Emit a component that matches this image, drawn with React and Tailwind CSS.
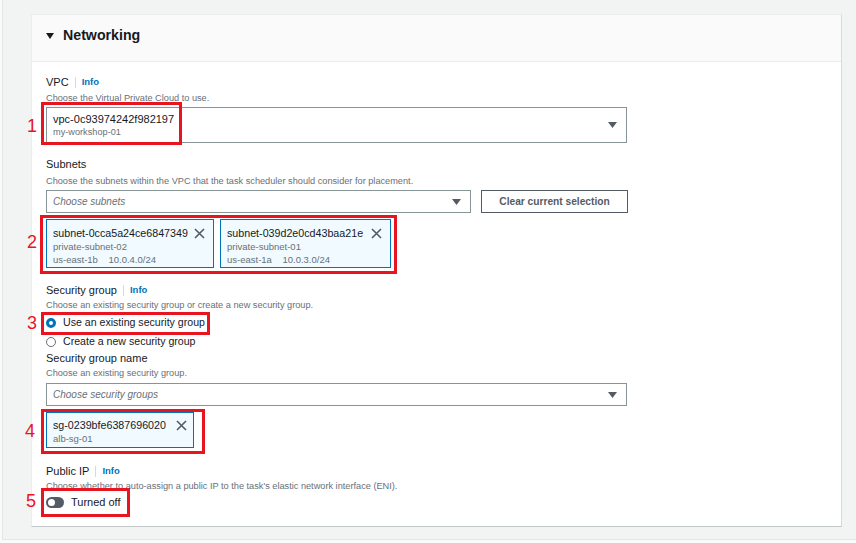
import React from "react";

const F = { fontFamily: '"Liberation Sans", Arial, sans-serif' };

function Caret() {
  return (
    <svg width="9" height="6" viewBox="0 0 9 6" className="shrink-0">
      <path d="M0 0 L9 0 L4.5 6 Z" fill="#545b64" />
    </svg>
  );
}

function XIcon() {
  return (
    <svg width="11" height="11" viewBox="0 0 11 11" className="shrink-0">
      <path d="M1 1 L10 10 M10 1 L1 10" stroke="#545b64" strokeWidth="1.6" />
    </svg>
  );
}

function Label({ children, info }) {
  return (
    <div className="flex items-center h-[14px] text-[11px] text-[#16191f] leading-[14px]">
      <span>{children}</span>
      {info && (
        <>
          <span className="mx-[6px] h-[11px] w-px bg-[#d5dbdb]" />
          <span className="text-[9.5px] font-bold text-[#0073bb]">Info</span>
        </>
      )}
    </div>
  );
}

function Desc({ children, className = "" }) {
  return (
    <div className={"h-[12px] text-[9.2px] leading-[12px] text-[#687078] whitespace-nowrap " + className}>
      {children}
    </div>
  );
}

function Token({ title, lines, w }) {
  return (
    <div
      className="h-[49px] flex items-start justify-between border border-[#0073bb] bg-[#f1faff] pl-[6px] pr-[8px] pt-[6px]"
      style={{ width: w }}
    >
      <div>
        <div className="text-[10.7px] leading-[14px] text-[#16191f] whitespace-nowrap">{title}</div>
        {lines.map((l, i) => (
          <div key={i} className="text-[9.5px] leading-[13px] text-[#687078] whitespace-pre">{l}</div>
        ))}
      </div>
      <div className="mt-[2px]"><XIcon /></div>
    </div>
  );
}

function RedBox({ x, y, w, h }) {
  return (
    <div
      className="absolute border-[3px] border-[#e8141f] pointer-events-none"
      style={{ left: x, top: y, width: w, height: h }}
    />
  );
}

function Num({ x, y, n }) {
  return (
    <div
      className="absolute text-[18px] leading-[18px] text-[#e8141f]"
      style={{ left: x, top: y }}
    >
      {n}
    </div>
  );
}

export default function App() {
  return (
    <div className="w-[856px] h-[543px] bg-[#fafafa] relative overflow-hidden" style={F}>
      <div className="ml-[2px] h-[540px] border-l border-b border-[#e3e6e6] bg-[#f2f3f3] pt-[14px] pl-[28px]">
        <div className="w-[811px] h-[513px] bg-white border-t border-l border-[#eaeded] border-r border-r-[#d5dbdb] border-b border-b-[#c3c8c8]">
          <div className="h-[47px] bg-[#fafafa] border-b border-[#eaeded] flex items-center pl-[14px] pb-[5px]">
            <svg width="8" height="6" viewBox="0 0 8 6" className="mr-[9px] mt-[1px]">
              <path d="M0 0 L8 0 L4 6 Z" fill="#16191f" />
            </svg>
            <span className="text-[14.2px] font-bold text-[#16191f]">Networking</span>
          </div>
          <div className="pl-[14px] pt-[13px]">
            <Label info>VPC</Label>
            <Desc className="mt-[3px]">Choose the Virtual Private Cloud to use.</Desc>
            <div className="mt-[3px] w-[581px] h-[36px] border border-[#879596] flex items-center justify-between pl-[6px] pr-[9px]">
              <div>
                <div className="text-[11px] leading-[14px] text-[#16191f]">vpc-0c93974242f982197</div>
                <div className="text-[9.2px] leading-[13px] text-[#687078]">my-workshop-01</div>
              </div>
              <Caret />
            </div>

            <div className="mt-[14px]"><Label>Subnets</Label></div>
            <Desc className="mt-[4px]">Choose the subnets within the VPC that the task scheduler should consider for placement.</Desc>
            <div className="mt-[3px] flex gap-[10px]">
              <div className="w-[425px] h-[23px] border border-[#879596] flex items-center justify-between pl-[6px] pr-[9px]">
                <span className="text-[10px] italic text-[#687078]">Choose subnets</span>
                <Caret />
              </div>
              <div className="w-[147px] h-[23px] border border-[#545b64] flex items-center justify-center text-[10.2px] font-bold text-[#545b64]">
                Clear current selection
              </div>
            </div>
            <div className="mt-[6px] flex gap-[6px]">
              <Token w={168} title="subnet-0cca5a24ce6847349" lines={["private-subnet-02", "us-east-1b    10.0.4.0/24"]} />
              <Token w={171} title="subnet-039d2e0cd43baa21e" lines={["private-subnet-01", "us-east-1a    10.0.3.0/24"]} />
            </div>

            <div className="mt-[15px]"><Label info>Security group</Label></div>
            <Desc className="mt-[2px]">Choose an existing security group or create a new security group.</Desc>
            <div className="mt-[4px] flex items-center h-[16px] text-[10.6px] text-[#16191f]">
              <span className="w-[10px] h-[10px] rounded-full border-[3px] border-[#0073bb] bg-white mr-[7px]" />
              Use an existing security group
            </div>
            <div className="mt-[3px] flex items-center h-[16px] text-[10.6px] text-[#16191f]">
              <span className="w-[10px] h-[10px] rounded-full border border-[#687078] bg-white mr-[7px]" />
              Create a new security group
            </div>
            <div className="mt-[1px]"><Label>Security group name</Label></div>
            <Desc className="mt-[2px]">Choose an existing security group.</Desc>
            <div className="mt-[4px] w-[581px] h-[23px] border border-[#879596] flex items-center justify-between pl-[6px] pr-[9px]">
              <span className="text-[10px] italic text-[#687078]">Choose security groups</span>
              <Caret />
            </div>
            <div className="mt-[6px] flex">
              <div className="w-[148px] h-[36px] flex items-start justify-between border border-[#0073bb] bg-[#f1faff] pl-[6px] pr-[6px] pt-[5px]">
                <div>
                  <div className="text-[10.7px] leading-[14px] text-[#16191f]">sg-0239bfe6387696020</div>
                  <div className="text-[9.5px] leading-[13px] text-[#687078]">alb-sg-01</div>
                </div>
                <div className="mt-[2px]"><XIcon /></div>
              </div>
            </div>

            <div className="mt-[16px]"><Label info>Public IP</Label></div>
            <Desc className="mt-[2px]">Choose whether to auto-assign a public IP to the task's elastic network interface (ENI).</Desc>
            <div className="mt-[3px] flex items-center h-[14px] text-[11px] text-[#16191f]">
              <span className="w-[18px] h-[11px] rounded-full bg-[#545b64] mr-[7px] flex items-center pl-[2px]">
                <span className="w-[7px] h-[7px] rounded-full bg-white" />
              </span>
              Turned off
            </div>
          </div>
        </div>
      </div>

      <RedBox x={41} y={102} w={141} h={43} />
      <RedBox x={40} y={215} w={357} h={59} />
      <RedBox x={41} y={312} w={169} h={23} />
      <RedBox x={41} y={409} w={164} h={45} />
      <RedBox x={41} y={488} w={89} h={29} />
      <Num x={27} y={117} n="1" />
      <Num x={27} y={233} n="2" />
      <Num x={27} y={314} n="3" />
      <Num x={25} y={422} n="4" />
      <Num x={26} y={492} n="5" />
    </div>
  );
}
